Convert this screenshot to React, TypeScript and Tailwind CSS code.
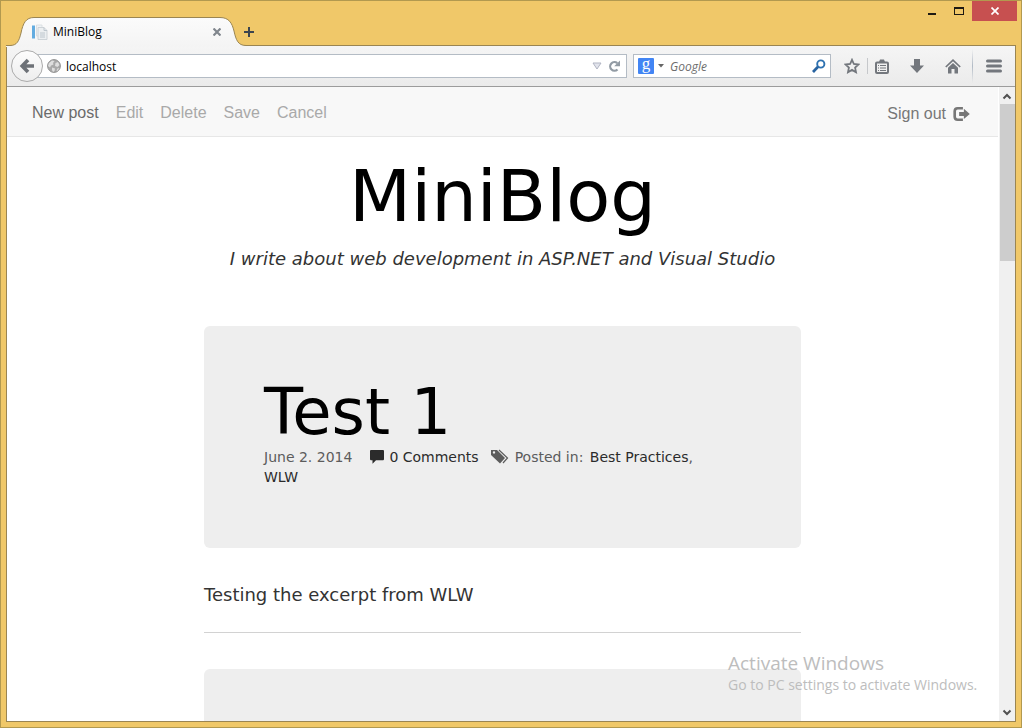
import React from 'react';

const UI_FONT = "font-['Open_Sans','Noto_Sans',sans-serif]";
const BLOG_FONT = "font-['DejaVu_Sans',sans-serif]";

function TitleBar() {
  return (
    <header className="relative flex h-[45px] shrink-0 items-end">
      <div className="relative h-7 w-[240px]">
        <svg className="absolute left-0 top-0" width="240" height="30" viewBox="0 0 240 30" aria-hidden="true">
          <defs>
            <linearGradient id="tab" x1="0" y1="0" x2="0" y2="1">
              <stop offset="0" stopColor="#fbfbfb" />
              <stop offset="1" stopColor="#f4f4f4" />
            </linearGradient>
          </defs>
          <path
            d="M0 30V28.5H4C11 28.5 13 24 15 16C17 6 20 .5 28 .5H214C223 .5 226 6 228 14C230 23 232 28.5 240 28.5V30Z"
            fill="url(#tab)"
          />
          <path
            d="M0 28.5H4C11 28.5 13 24 15 16C17 6 20 .5 28 .5H214C223 .5 226 6 228 14C230 23 232 28.5 240 28.5"
            fill="none"
            stroke="#9a8552"
          />
        </svg>
        <div className="relative flex h-full items-center pl-[26px] pr-[21px] pt-0.5">
          <svg width="16" height="16" viewBox="0 0 16 16" aria-hidden="true">
            <path d="M0 1.5H3V14.5H0Z" fill="#63ace0" />
            <path d="M4.5 1H10V12H4.5Z" fill="#f0f3f5" stroke="#d5dade" strokeWidth=".8" />
            <path d="M6 3.5H12L15 6.5V15.5H6Z" fill="#eceff1" stroke="#c5cbd0" strokeWidth=".8" />
            <path d="M12 3.5V6.5H15M8 9H13M8 11H13M8 13H13" fill="none" stroke="#b9c2c9" strokeWidth=".9" />
          </svg>
          <span className="ml-[5px] text-[12px] leading-4 text-black">MiniBlog</span>
          <button type="button" aria-label="Close tab" className="ml-auto flex h-4 w-4 items-center justify-center">
            <svg width="8" height="8" viewBox="0 0 8 8">
              <path d="M.5 .5L7.5 7.5M7.5 .5L.5 7.5" stroke="#80868d" strokeWidth="2.2" />
            </svg>
          </button>
        </div>
      </div>
      <button type="button" aria-label="New tab" className="-ml-[2px] mb-2 flex h-[10px] w-[10px]">
        <svg width="10" height="10" viewBox="0 0 10 10">
          <path d="M5 0V10M0 5H10" stroke="#3c454e" strokeWidth="2" />
        </svg>
      </button>
      <div className="-mr-px ml-auto flex h-[21px] items-center self-start">
        <button type="button" aria-label="Minimize" className="flex h-full w-[28px] items-end justify-center pb-[6px]">
          <span className="h-[2px] w-2 bg-[#1e1a12]" />
        </button>
        <button type="button" aria-label="Maximize" className="flex h-full w-[26px] items-center justify-center">
          <span className="h-[8px] w-[10px] border border-t-2 border-[#1e1a12]" />
        </button>
        <button type="button" aria-label="Close" className="flex h-[21px] w-[45px] items-center justify-center bg-[#c75050]">
          <svg width="8" height="8" viewBox="0 0 8 8">
            <path d="M.5 .5L7.5 7.5M7.5 .5L.5 7.5" stroke="#fff" strokeWidth="1.7" />
          </svg>
        </button>
      </div>
    </header>
  );
}

function ToolButton({ label, children }: { label: string; children: React.ReactNode }) {
  return (
    <button type="button" aria-label={label} className="flex h-5 w-[18px] shrink-0 items-center justify-center">
      {children}
    </button>
  );
}

function Toolbar() {
  return (
    <div className="flex h-[41px] shrink-0 items-center border-b border-[#9c9c9c] bg-linear-to-b from-[#f5f5f5] to-[#ebebeb] pl-1 pr-3">
      <button
        type="button"
        aria-label="Back"
        className="z-10 flex h-8 w-8 shrink-0 items-center justify-center rounded-full border border-[#ababab] bg-linear-to-b from-[#fdfdfd] to-[#ededed]"
      >
        <svg width="16" height="16" viewBox="0 0 16 16">
          <path d="M9 2L3.2 8L9 14M3 8H15" fill="none" stroke="#6d7177" strokeWidth="3.6" />
        </svg>
      </button>
      <div className="-ml-2 flex h-6 min-w-0 flex-1 items-center border border-[#b4bcc5] bg-white pl-[11px] pr-[5px]">
        <svg className="shrink-0" width="14" height="14" viewBox="0 0 14 14" aria-hidden="true">
          <circle cx="7" cy="7" r="6.4" fill="#a9a9a9" stroke="#919191" />
          <path d="M2 4L5 1.5L7.5 2L6 4L6.5 5.5L4 6.5L3 8.5L1 7ZM8.5 4L11 3L12.5 6L10.5 8L8 7ZM5 8.5L8 9.5L7.5 12L6 13L5 11ZM10.5 9.5L12 9L11 11.5L9.5 12Z" fill="#dedede" />
        </svg>
        <input
          aria-label="Address"
          defaultValue="localhost"
          className="ml-[5px] min-w-0 flex-1 bg-transparent pt-0.5 text-[12px] leading-4 text-black outline-none"
        />
        <button type="button" aria-label="Show history" className="mr-1.5 flex">
          <svg width="10" height="8" viewBox="0 0 10 8">
            <path d="M1 1H9L5 7Z" fill="#e2e4ec" stroke="#b1b5c3" />
          </svg>
        </button>
        <button type="button" aria-label="Reload" className="flex">
          <svg width="13" height="13" viewBox="0 0 13 13">
            <path d="M9.5 9.5A4.3 4.3 0 1 1 9.3 3.2" fill="none" stroke="#929ba4" strokeWidth="2.2" />
            <path d="M12 .5V6.3H6.2Z" fill="#929ba4" />
          </svg>
        </button>
      </div>
      <div className="ml-1.5 flex h-6 w-[198px] shrink-0 items-center border border-[#b4bcc5] bg-white px-1">
        <span className="flex h-4 w-4 items-center justify-center rounded-[1px] bg-[#4285f4] pb-1 font-['Liberation_Serif',serif] text-[17px] leading-4 text-white">
          g
        </span>
        <svg className="ml-1" width="6" height="4" viewBox="0 0 6 4" aria-hidden="true">
          <path d="M0 0H6L3 3.5Z" fill="#666" />
        </svg>
        <input
          aria-label="Search"
          placeholder="Google"
          className="ml-1.5 min-w-0 flex-1 bg-transparent pt-0.5 text-[12px] italic leading-4 outline-none placeholder:text-[#6d6d6d]"
        />
        <button type="button" aria-label="Search" className="flex">
          <svg width="14" height="14" viewBox="0 0 14 14">
            <circle cx="8.8" cy="5" r="3.6" fill="none" stroke="#2d71b0" strokeWidth="1.9" />
            <path d="M6 7.8L1 13" stroke="#2863a0" strokeWidth="2.7" />
          </svg>
        </button>
      </div>
      <div className="ml-3 flex items-center text-[#73777d]">
        <ToolButton label="Bookmark this page">
          <svg width="16" height="16" viewBox="0 0 16 16">
            <path d="M8 1.8L9.9 6L14.5 6.5L11.1 9.6L12 14.2L8 11.9L4 14.2L4.9 9.6L1.5 6.5L6.1 6Z" fill="none" stroke="currentColor" strokeWidth="1.8" />
          </svg>
        </ToolButton>
        <span className="ml-1.5 h-4 w-px bg-[#c6c8cb]" />
        <span className="ml-[5px] flex">
          <ToolButton label="Bookmarks">
            <svg width="14" height="15" viewBox="0 0 14 15">
              <path d="M4 3L5 .5H9L10 3Z" fill="currentColor" />
              <rect x="1" y="3.5" width="12" height="10.5" rx="1" fill="none" stroke="currentColor" strokeWidth="2" />
              <path d="M3 6.5H4M5 6.5H11M3 9H4M5 9H11M3 11.5H4M5 11.5H11" stroke="currentColor" strokeWidth="1" />
            </svg>
          </ToolButton>
        </span>
        <span className="ml-[17px] flex">
          <ToolButton label="Downloads">
            <svg width="14" height="14" viewBox="0 0 14 14">
              <path d="M4 0H10V6.5H14L7 14L0 6.5H4Z" fill="currentColor" />
            </svg>
          </ToolButton>
        </span>
        <span className="ml-[18px] flex">
          <ToolButton label="Home">
            <svg width="16" height="15" viewBox="0 0 16 15">
              <path d="M.8 8L8 1.2L15.2 8" fill="none" stroke="currentColor" strokeWidth="1.7" />
              <path d="M8 4L13 8.7V14.5H9.5V10H6.5V14.5H3V8.7Z" fill="currentColor" />
            </svg>
          </ToolButton>
        </span>
        <span className="ml-2.5 h-[34px] w-px bg-linear-to-b from-transparent via-[#b1bac5] to-transparent" />
        <span className="ml-3 flex">
          <ToolButton label="Menu">
            <svg width="16" height="14" viewBox="0 0 16 14">
              <path d="M1.5 2H14.5M1.5 7H14.5M1.5 12H14.5" stroke="currentColor" strokeWidth="3" strokeLinecap="round" />
            </svg>
          </ToolButton>
        </span>
      </div>
    </div>
  );
}

function AdminBar() {
  return (
    <nav className="flex h-[50px] items-center border-b border-[#e7e7e7] bg-[#f8f8f8] pl-[25px] pr-7 font-['Liberation_Sans',Arial,sans-serif] text-[16px] leading-5 text-[#777]">
      <div className="flex gap-[17px] pt-0.5">
        <a href="#new" className="text-[#6b6b6b]">New post</a>
        <button type="button" disabled className="text-[#a9a9a9]">Edit</button>
        <button type="button" disabled className="text-[#a9a9a9]">Delete</button>
        <button type="button" disabled className="text-[#a9a9a9]">Save</button>
        <button type="button" disabled className="text-[#a9a9a9]">Cancel</button>
      </div>
      <a href="#signout" className="ml-auto flex items-center gap-[7px] pt-[5px]">
        Sign out
        <svg width="17" height="16" viewBox="0 0 18 16" aria-hidden="true">
          <path d="M10.5 1.9H5Q1.8 1.9 1.8 5V11Q1.8 14.1 5 14.1H10.5" fill="none" stroke="currentColor" strokeWidth="2.8" />
          <path d="M6.5 5.8H11.5V2.5L17.8 8L11.5 13.3V10.2H6.5Z" fill="currentColor" />
        </svg>
      </a>
    </nav>
  );
}

function Post() {
  return (
    <article>
      <header className="rounded-md bg-[#eee] px-[60px] pb-[61px] pt-[54px]">
        <h2 className="text-[64px] leading-[64px] text-black">
          <a href="#test-1">Test 1</a>
        </h2>
        <p className="mt-[3px] max-w-[440px] text-[14px] leading-5 text-[#5c5c5c]">
          <time dateTime="2014-06-02">June 2. 2014</time>
          <a href="#comments" className="ml-[18px] text-[#2b2b2b]">
            <svg className="mr-[5px] inline-block align-[-2px]" width="14" height="14" viewBox="0 0 14 14" aria-hidden="true">
              <path d="M1 0H13Q14 0 14 1V9Q14 10.3 13 10.3H6L2.5 13.7V10.3H1Q0 10.3 0 9V1Q0 0 1 0Z" fill="currentColor" />
            </svg>
            0 Comments
          </a>
          <svg className="ml-3 mr-[6px] inline-block align-[-2px]" width="18" height="15" viewBox="0 0 18 15" aria-hidden="true">
            <path fillRule="evenodd" d="M0 1H6L14 9L9 14.5L0 6ZM3 2.2A1.2 1.2 0 1 0 3 4.6A1.2 1.2 0 1 0 3 2.2Z" fill="currentColor" />
            <path d="M8 1L16.5 9L12 14" fill="none" stroke="currentColor" strokeWidth="1.2" />
          </svg>
          Posted in: <a href="#best-practices" className="ml-0.5 text-[#2b2b2b]">Best Practices</a>,{' '}
          <a href="#wlw" className="text-[#2b2b2b]">WLW</a>
        </p>
      </header>
      <p className="mt-[35px] text-[18px] leading-6">Testing the excerpt from WLW</p>
    </article>
  );
}

function Scrollbar() {
  return (
    <div className="flex w-[17px] shrink-0 flex-col items-center border-l border-white bg-[#f0f0f0]" aria-hidden="true">
      <svg className="shrink-0" width="16" height="17" viewBox="0 0 16 17">
        <path d="M4.5 11.5L8 8L11.5 11.5" fill="none" stroke="#505050" strokeWidth="2" />
      </svg>
      <div className="h-[157px] w-[15px] bg-[#cdcdcd]" />
      <svg className="mt-auto shrink-0" width="16" height="17" viewBox="0 0 16 17">
        <path d="M4.5 6.5L8 10L11.5 6.5" fill="none" stroke="#505050" strokeWidth="2" />
      </svg>
    </div>
  );
}

export default function App() {
  return (
    <div className={`relative flex h-screen flex-col overflow-hidden border border-[#b2994f] bg-[#f0c869] px-[5px] pb-[5px] ${UI_FONT}`}>
      <div className="-mt-px flex min-h-0 flex-1 flex-col">
        <TitleBar />
        <div className="flex min-h-0 flex-1 flex-col border border-[#9a8552]">
          <Toolbar />
          <div className="flex min-h-0 flex-1 bg-white">
            <div className="min-w-0 flex-1 overflow-hidden">
              <AdminBar />
              <main className={`mx-auto w-full max-w-[597px] text-[#333] ${BLOG_FONT}`}>
                <div className="pt-[23px] text-center">
                  <h1 className="text-[72px] leading-[72px] text-black">MiniBlog</h1>
                  <p className="mt-[15px] whitespace-nowrap text-[18px] italic leading-6">
                    I write about web development in ASP.NET and Visual Studio
                  </p>
                </div>
                <div className="mt-[55px]">
                  <Post />
                  <hr className="mb-9 mt-[25px] border-[#d2d2d2]" />
                  <div className="h-[222px] rounded-md bg-[#eee]" />
                </div>
              </main>
            </div>
            <Scrollbar />
          </div>
        </div>
      </div>
      <aside className="pointer-events-none absolute bottom-8 right-[38px] w-[255px] whitespace-nowrap text-[#bdbdbd]">
        <p className="text-[19px] leading-6">Activate Windows</p>
        <p className="text-[14px] leading-5">Go to PC settings to activate Windows.</p>
      </aside>
    </div>
  );
}
